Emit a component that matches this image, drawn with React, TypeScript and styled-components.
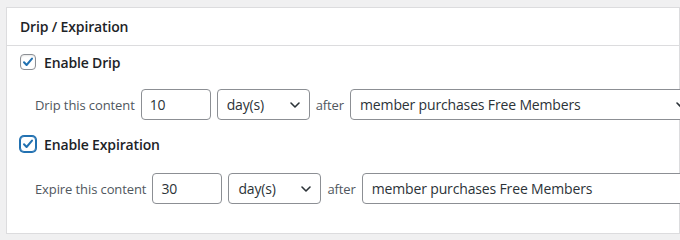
import React from 'react';
import styled, { createGlobalStyle } from 'styled-components';

const GlobalStyle = createGlobalStyle`
    html, body {
        margin: 0;
        padding: 0;
        background: #f0f0f1;
        overflow: hidden;
    }
    body {
        font-family: "Open Sans", "Noto Sans", sans-serif;
        color: #3c434a;
    }
`;

const Chevron = () => (
    <svg width="12" height="12" viewBox="0 0 12 12" fill="none">
        <path d="M2 4l4 4 4-4" stroke="#2c3338" strokeWidth="1.6" strokeLinecap="round" strokeLinejoin="round" />
    </svg>
);

const Check = () => (
    <svg width="14" height="14" viewBox="0 0 14 14" fill="none">
        <path d="M3 7.2l2.6 2.8L11 3.6" stroke="#2271b1" strokeWidth="2" strokeLinecap="round" strokeLinejoin="round" />
    </svg>
);

type Row = { label: string; value: string; focused: boolean; enable: string; offset: number };

const rows: Row[] = [
    { enable: 'Enable Drip', label: 'Drip this content', value: '10', focused: false, offset: 15 },
    { enable: 'Enable Expiration', label: 'Expire this content', value: '30', focused: true, offset: 17 },
];

const App = () => {
    return (
        <Page>
            <GlobalStyle />
            <Panel>
                <Header>Drip / Expiration</Header>
                <Body>
                    {rows.map((row, i) => (
                        <Section key={row.enable} $first={i === 0}>
                            <CheckRow>
                                <Box $focused={row.focused}>
                                    <Check />
                                </Box>
                                <CheckLabel>{row.enable}</CheckLabel>
                            </CheckRow>
                            <FieldRow $offset={row.offset}>
                                <FieldLabel>{row.label}</FieldLabel>
                                <NumberInput type="text" defaultValue={row.value} />
                                <SelectWrap $width={93}>
                                    <Select defaultValue="days">
                                        <option value="days">day(s)</option>
                                        <option value="weeks">week(s)</option>
                                        <option value="months">month(s)</option>
                                    </Select>
                                    <Arrow>
                                        <Chevron />
                                    </Arrow>
                                </SelectWrap>
                                <FieldLabel>after</FieldLabel>
                                <SelectWrap $width={346}>
                                    <Select defaultValue="free">
                                        <option value="free">member purchases Free Members</option>
                                    </Select>
                                    <Arrow>
                                        <Chevron />
                                    </Arrow>
                                </SelectWrap>
                            </FieldRow>
                        </Section>
                    ))}
                </Body>
            </Panel>
        </Page>
    );
};

export default App;

const Page = styled.div`
    width: 680px;
    height: 240px;
    padding: 7px 0 0 6px;
    box-sizing: border-box;
    overflow: hidden;
`;

const Panel = styled.div`
    width: 674px;
    height: 227px;
    box-sizing: border-box;
    background: #fff;
    border: 1px solid #dcdcde;
`;

const Header = styled.div`
    height: 38px;
    box-sizing: border-box;
    border-bottom: 1px solid #dcdcde;
    padding: 0 13px;
    display: flex;
    align-items: center;
    font-size: 14px;
    font-weight: 600;
    letter-spacing: -0.15px;
    color: #1d2327;
`;

const Body = styled.div`
    padding: 4px 0 0 13px;
`;

const Section = styled.div<{ $first: boolean }>`
    margin-top: ${(p) => (p.$first ? '0' : '12px')};
`;

const CheckRow = styled.div`
    height: 24px;
    display: flex;
    align-items: center;
    gap: 8px;
`;

const Box = styled.span<{ $focused: boolean }>`
    width: 16px;
    height: 16px;
    box-sizing: border-box;
    border-radius: 4px;
    border: 1px solid ${(p) => (p.$focused ? '#2271b1' : '#8c8f94')};
    box-shadow: ${(p) => (p.$focused ? '0 0 0 1px #2271b1' : 'inset 0 1px 2px rgba(0,0,0,0.1)')};
    display: flex;
    align-items: center;
    justify-content: center;
    background: #fff;
`;

const CheckLabel = styled.span`
    font-size: 14px;
    font-weight: 600;
    letter-spacing: -0.15px;
    color: #1d2327;
`;

const FieldRow = styled.div<{ $offset: number }>`
    margin-top: ${(p) => p.$offset}px;
    padding-left: 15px;
    width: max-content;
    display: flex;
    align-items: center;
    gap: 6px;
    white-space: nowrap;
`;

const FieldLabel = styled.span`
    flex: none;
    font-size: 13px;
    letter-spacing: -0.1px;
    color: #50575e;
`;

const NumberInput = styled.input`
    flex: none;
    width: 70px;
    height: 31px;
    box-sizing: border-box;
    border: 1px solid #8c8f94;
    border-radius: 4px;
    padding: 0 8px;
    font-family: inherit;
    font-size: 14px;
    letter-spacing: -0.15px;
    color: #2c3338;
    outline: none;
`;

const SelectWrap = styled.div<{ $width: number }>`
    position: relative;
    flex: none;
    width: ${(p) => p.$width}px;
    min-width: ${(p) => p.$width}px;
    display: flex;
`;

const Select = styled.select`
    appearance: none;
    width: 100%;
    height: 31px;
    box-sizing: border-box;
    border: 1px solid #8c8f94;
    border-radius: 4px;
    padding: 0 24px 0 9px;
    background: #fff;
    font-family: inherit;
    font-size: 14px;
    letter-spacing: -0.15px;
    color: #2c3338;
    outline: none;
`;

const Arrow = styled.span`
    position: absolute;
    right: 9px;
    top: 50%;
    transform: translateY(-50%);
    display: flex;
    pointer-events: none;
`;
